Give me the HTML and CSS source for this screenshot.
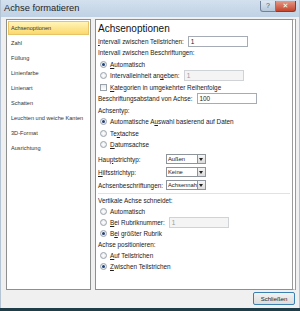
FILE: index.html
```html
<!DOCTYPE html>
<html lang="de">
<head>
    <meta charset="UTF-8">
    <title>Achse formatieren</title>
    <link rel="stylesheet" href="styles.css">
</head>
<body>
    <div class="window">
        <div class="titlebar">
            <span class="title">Achse formatieren</span>
            <div class="caption-buttons">
                <span class="cap-btn help">?</span>
                <span class="cap-btn close">✕</span>
            </div>
        </div>

        <div class="content">
            <!-- linke Liste -->
            <ul class="nav">
                <li class="active">Achsenoptionen</li>
                <li>Zahl</li>
                <li>Füllung</li>
                <li>Linienfarbe</li>
                <li>Linienart</li>
                <li>Schatten</li>
                <li>Leuchten und weiche Kanten</li>
                <li>3D-Format</li>
                <li>Ausrichtung</li>
            </ul>

            <!-- rechte Seite -->
            <div class="panel">
                <h1>Achsenoptionen</h1>
                <div class="row">
                    <span><u>I</u>ntervall zwischen Teilstrichen:</span>
                    <span class="field">1</span>
                </div>
                <div class="row">Intervall zwischen Beschriftungen:</div>
                <div class="row opt"><span class="radio on"></span><span><u>A</u>utomatisch</span></div>
                <div class="row opt">
                    <span class="radio"></span><span>Intervalleinheit an<u>g</u>eben:</span>
                    <span class="field disabled">1</span>
                </div>
                <div class="row opt"><span class="check"></span><span><u>K</u>ategorien in umgekehrter Reihenfolge</span></div>
                <div class="row">
                    <span>Beschriftungsabstand von Achse:</span>
                    <span class="field">100</span>
                </div>
                <div class="row">Achsentyp:</div>
                <div class="row opt"><span class="radio on"></span><span>Automatische A<u>u</u>swahl basierend auf Daten</span></div>
                <div class="row opt"><span class="radio"></span><span>Te<u>x</u>tachse</span></div>
                <div class="row opt"><span class="radio"></span><span><u>D</u>atumsachse</span></div>

                <div class="row sel-row first">
                    <span class="sel-label">Hau<u>p</u>tstrichtyp:</span>
                    <span class="select"><span class="sel-text">Außen</span><span class="sel-arrow"></span></span>
                </div>
                <div class="row sel-row">
                    <span class="sel-label"><u>H</u>ilfsstrichtyp:</span>
                    <span class="select"><span class="sel-text">Keine</span><span class="sel-arrow"></span></span>
                </div>
                <div class="row sel-row">
                    <span class="sel-label">Achsenbeschriftungen:</span>
                    <span class="select"><span class="sel-text">Achsennah</span><span class="sel-arrow"></span></span>
                </div>

                <div class="separator"></div>

                <div class="row low">Vertikale Achse schneidet:</div>
                <div class="row low opt"><span class="radio"></span><span>Automatisch</span></div>
                <div class="row low opt">
                    <span class="radio"></span><span><u>B</u>ei Rubriknummer:</span>
                    <span class="field disabled">1</span>
                </div>
                <div class="row low opt"><span class="radio on"></span><span>B<u>e</u>i größter Rubrik</span></div>
                <div class="row low">Achse positionieren:</div>
                <div class="row low opt"><span class="radio"></span><span><u>A</u>uf Teilstrichen</span></div>
                <div class="row low opt"><span class="radio on"></span><span><u>Z</u>wischen Teilstrichen</span></div>
            </div>
        </div>

        <div class="footer">
            <button class="btn">Schließen</button>
        </div>
    </div>
</body>
</html>
```

FILE: styles.css
```css
body {
    margin: 0;
    padding: 0;
    font-family: "Liberation Sans", "DejaVu Sans", sans-serif;
    background-color: #1f3d49;
}
.window {
    width: 300px;
    height: 308px;
    background-color: #f0f0f0;
    display: flex;
    flex-direction: column;
    box-sizing: border-box;
    border-left: 1px solid #b4c4d4;
    border-right: 1px solid #b4c4d4;
}
.titlebar {
    height: 17px;
    display: flex;
    align-items: center;
    justify-content: space-between;
    background: linear-gradient(#d3e0ee, #bfd1e4);
    padding: 0 3px 0 3px;
}
.title {
    font-size: 9.3px;
    color: #1e1e1e;
}
.caption-buttons {
    display: flex;
    margin-top: -3px;
}
.cap-btn {
    height: 10px;
    font-size: 7px;
    line-height: 10px;
    text-align: center;
    border: 1px solid #6f8299;
    border-top: none;
}
.help {
    width: 14px;
    color: #4b5d73;
    background: linear-gradient(#dde7f2, #b7c8db);
    border-radius: 0 0 0 3px;
}
.close {
    width: 19px;
    color: #fff;
    font-weight: bold;
    background: linear-gradient(#e49a8a, #c5442b);
    border-color: #8a3a2c;
    border-left: none;
    border-radius: 0 0 3px 0;
}
.content {
    flex: 1;
    display: flex;
    gap: 4px;
    padding: 2px 3px 0 5px;
}
.nav {
    list-style-type: none;
    margin: 0;
    padding: 1px;
    width: 85px;
    height: 271px;
    background-color: #fff;
    border: 1px solid #8e8f8f;
    box-sizing: border-box;
}
.nav li {
    font-size: 5.6px;
    color: #333;
    height: 12px;
    line-height: 12px;
    padding-left: 2px;
    margin-bottom: 1px;
    border: 1px solid transparent;
    white-space: nowrap;
}
.nav li.active {
    background: linear-gradient(#fff4b8, #fbd86b);
    border-color: #e6c467;
}
.panel {
    flex: 1;
    height: 271px;
    background-color: #fff;
    border: 1px solid #8e8f8f;
    border-right: 4px double #9a9a9a;
    box-sizing: border-box;
    padding: 2px 2px 0 2px;
    font-size: 6.4px;
    color: #222;
}
h1 {
    font-size: 10px;
    font-weight: normal;
    margin: 1px 0 2px 0;
    color: #111;
}
.row {
    display: flex;
    align-items: center;
    height: 11.5px;
    white-space: nowrap;
}
.row.low {
    height: 11px;
}
.opt {
    padding-left: 2px;
}
.field {
    display: inline-block;
    width: 60px;
    height: 11px;
    line-height: 10px;
    border: 1px solid #a5acb5;
    margin-left: 4px;
    padding-left: 2px;
    box-sizing: border-box;
    background-color: #fff;
}
.field.disabled {
    background-color: #f4f4f4;
    border-color: #cfd3d8;
    color: #999;
}
.radio {
    width: 7px;
    height: 7px;
    border-radius: 50%;
    border: 1px solid #9aa3ab;
    background: radial-gradient(#fff, #dfe3e8);
    box-sizing: border-box;
    margin-right: 3px;
    position: relative;
}
.radio.on::after {
    content: "";
    position: absolute;
    left: 1px;
    top: 1px;
    width: 3px;
    height: 3px;
    border-radius: 50%;
    background: #1e3f77;
}
.check {
    width: 7px;
    height: 7px;
    border: 1px solid #9aa3ab;
    background: linear-gradient(#e8eaec, #fff);
    box-sizing: border-box;
    margin-right: 3px;
}
.sel-row {
    height: 13px;
}
.sel-row.first {
    margin-top: 2px;
}
.sel-label {
    width: 68px;
}
.select {
    display: flex;
    width: 40px;
    height: 10px;
    border: 1px solid #8e949b;
    box-sizing: border-box;
}
.sel-text {
    flex: 1;
    padding-left: 1px;
    font-size: 5.8px;
    line-height: 8px;
    overflow: hidden;
}
.sel-arrow {
    width: 7px;
    border-left: 1px solid #8e949b;
    background: linear-gradient(#f5f5f5, #dcdcdc);
    position: relative;
}
.sel-arrow::after {
    content: "";
    position: absolute;
    left: 1px;
    top: 3px;
    border-left: 2.5px solid transparent;
    border-right: 2.5px solid transparent;
    border-top: 3px solid #222;
}
.separator {
    height: 1px;
    background-color: #e2e2e2;
    margin: 1px 0 1px 0;
}
.footer {
    height: 19px;
    display: flex;
    justify-content: flex-end;
    align-items: center;
    padding-right: 4px;
}
.btn {
    width: 42px;
    height: 13px;
    padding: 0;
    font-family: "Liberation Sans", sans-serif;
    font-size: 6px;
    color: #222;
    border: 1px solid #3c7fb1;
    border-radius: 2px;
    background: linear-gradient(#f2f2f2, #dcdcdc);
}
```
